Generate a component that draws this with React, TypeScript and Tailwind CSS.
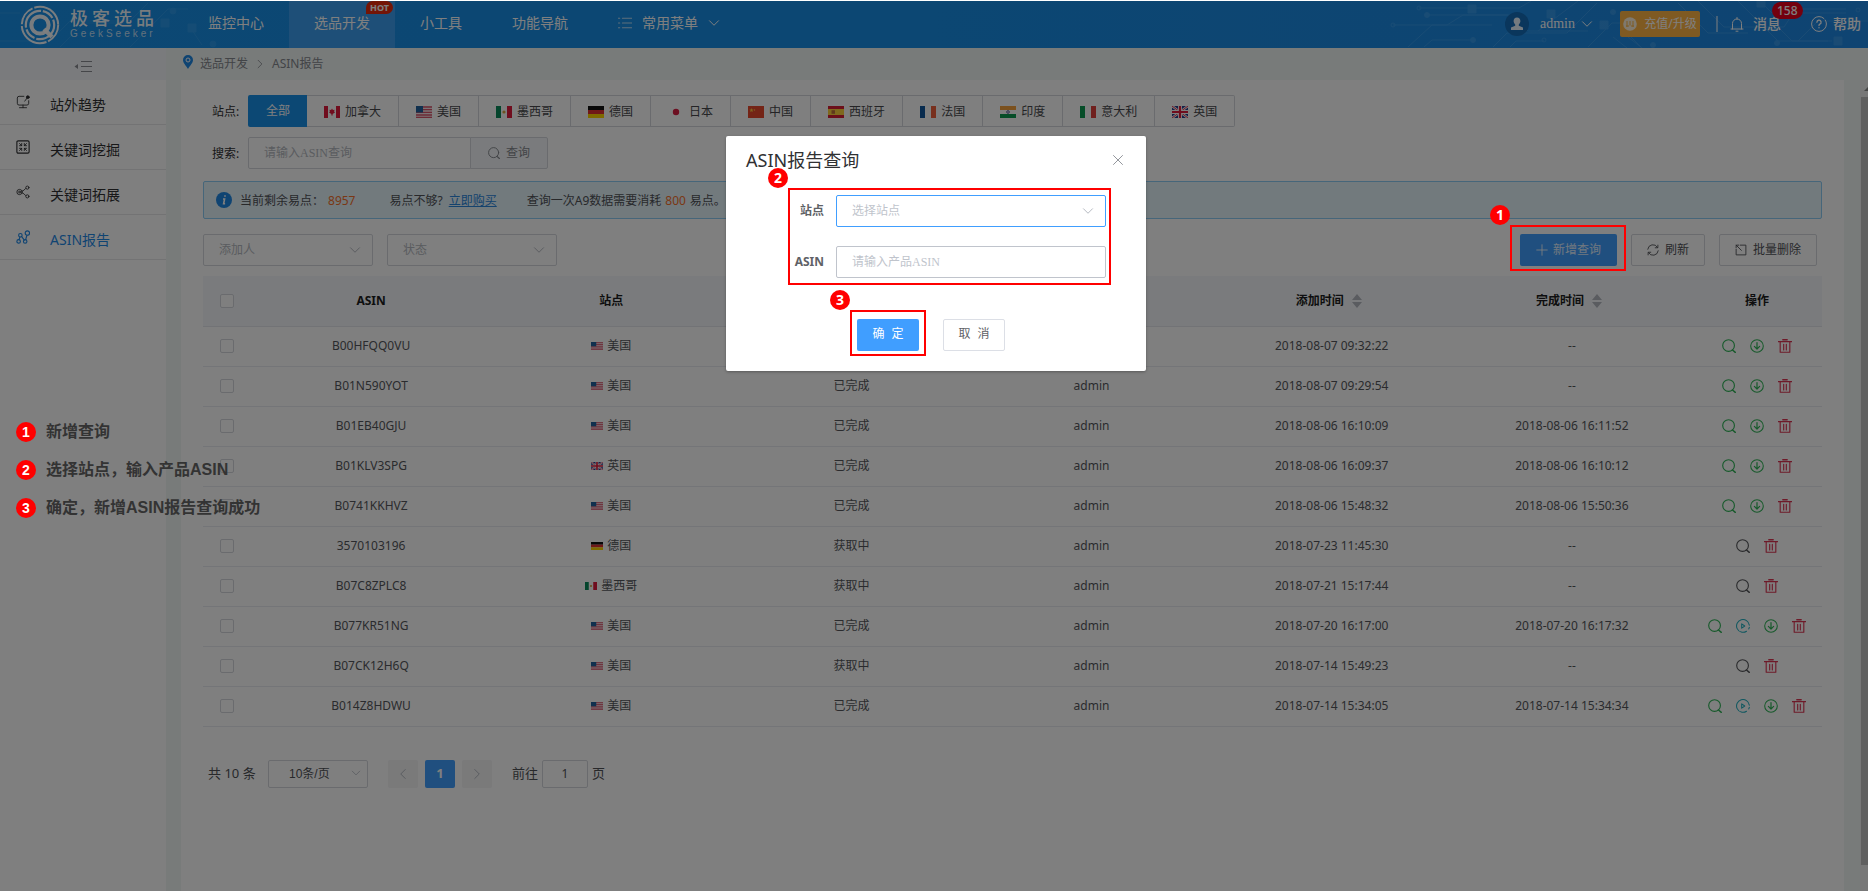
// src/App.tsx
import type { ReactNode } from 'react';

type Country = 'ca' | 'us' | 'mx' | 'de' | 'jp' | 'cn' | 'es' | 'fr' | 'in' | 'it' | 'uk';

const sites: { code: Country; name: string }[] = [
  { code: 'ca', name: '加拿大' },
  { code: 'us', name: '美国' },
  { code: 'mx', name: '墨西哥' },
  { code: 'de', name: '德国' },
  { code: 'jp', name: '日本' },
  { code: 'cn', name: '中国' },
  { code: 'es', name: '西班牙' },
  { code: 'fr', name: '法国' },
  { code: 'in', name: '印度' },
  { code: 'it', name: '意大利' },
  { code: 'uk', name: '英国' },
];

const reports: {
  asin: string;
  site: Country;
  status: string;
  added: string;
  finished: string;
  rerun?: boolean;
}[] = [
  { asin: 'B00HFQQ0VU', site: 'us', status: '已完成', added: '2018-08-07 09:32:22', finished: '--' },
  { asin: 'B01N590YOT', site: 'us', status: '已完成', added: '2018-08-07 09:29:54', finished: '--' },
  { asin: 'B01EB40GJU', site: 'us', status: '已完成', added: '2018-08-06 16:10:09', finished: '2018-08-06 16:11:52' },
  { asin: 'B01KLV3SPG', site: 'uk', status: '已完成', added: '2018-08-06 16:09:37', finished: '2018-08-06 16:10:12' },
  { asin: 'B0741KKHVZ', site: 'us', status: '已完成', added: '2018-08-06 15:48:32', finished: '2018-08-06 15:50:36' },
  { asin: '3570103196', site: 'de', status: '获取中', added: '2018-07-23 11:45:30', finished: '--' },
  { asin: 'B07C8ZPLC8', site: 'mx', status: '获取中', added: '2018-07-21 15:17:44', finished: '--' },
  { asin: 'B077KR51NG', site: 'us', status: '已完成', added: '2018-07-20 16:17:00', finished: '2018-07-20 16:17:32', rerun: true },
  { asin: 'B07CK12H6Q', site: 'us', status: '获取中', added: '2018-07-14 15:49:23', finished: '--' },
  { asin: 'B014Z8HDWU', site: 'us', status: '已完成', added: '2018-07-14 15:34:05', finished: '2018-07-14 15:34:34', rerun: true },
];

const steps = ['新增查询', '选择站点，输入产品ASIN', '确定，新增ASIN报告查询成功'];

const flagShapes: Record<Country, ReactNode> = {
  ca: (
    <>
      <rect width="16" height="12" fill="#fff" />
      <rect width="4" height="12" fill="#e01b3c" />
      <rect x="12" width="4" height="12" fill="#e01b3c" />
      <path d="M8 2.5l.9 1.6 1.6-.3-.3 2 .8.8-2.4 1.3V9.5h-1.2V7.900L5 6.600l.8-.8-.3-2 1.600.3z" fill="#e01b3c" />
    </>
  ),
  us: (
    <>
      <rect width="16" height="12" fill="#f6e4e8" />
      <path d="M0 1h16M0 3.700h16M0 6.400h16M0 9h16M0 11.500h16" stroke="#d8546c" strokeWidth="1.300" />
      <rect width="7" height="6.500" fill="#20609c" />
    </>
  ),
  mx: (
    <>
      <rect width="16" height="12" fill="#fff" />
      <rect width="5" height="12" fill="#0b8a5a" />
      <rect x="11" width="5" height="12" fill="#e01b3c" />
      <circle cx="8" cy="6" r="1.600" fill="#d9a441" />
    </>
  ),
  de: (
    <>
      <rect width="16" height="4" fill="#111" />
      <rect y="4" width="16" height="4" fill="#e03030" />
      <rect y="8" width="16" height="4" fill="#ffd500" />
    </>
  ),
  jp: (
    <>
      <rect width="16" height="12" fill="#fff" />
      <circle cx="8" cy="6" r="3.200" fill="#d81e42" />
    </>
  ),
  cn: (
    <>
      <rect width="16" height="12" fill="#e8492c" />
      <path d="M3.500 2l.6 1.400 1.500.1-1.200 1 .4 1.500-1.300-.8L2.200 6l.4-1.500-1.200-1 1.500-.1z" fill="#ffc83d" />
      <circle cx="6.500" cy="4" r=".7" fill="#ffc83d" />
    </>
  ),
  es: (
    <>
      <rect width="16" height="12" fill="#d81e34" />
      <rect y="3" width="16" height="6" fill="#ffd23d" />
      <rect x="3.500" y="4.200" width="3.500" height="3.600" fill="#c0703a" />
    </>
  ),
  fr: (
    <>
      <rect width="16" height="12" fill="#fff" />
      <rect width="5" height="12" fill="#10569c" />
      <rect x="11" width="5" height="12" fill="#f0603c" />
    </>
  ),
  in: (
    <>
      <rect width="16" height="12" fill="#fff" />
      <rect width="16" height="4" fill="#f7a23c" />
      <rect y="8" width="16" height="4" fill="#0c9a50" />
      <circle cx="8" cy="6" r="1.300" fill="none" stroke="#555a9c" />
    </>
  ),
  it: (
    <>
      <rect width="16" height="12" fill="#fff" />
      <rect width="5" height="12" fill="#0c9a50" />
      <rect x="11" width="5" height="12" fill="#e0413c" />
    </>
  ),
  uk: (
    <>
      <rect width="16" height="12" fill="#27408f" />
      <path d="M0 0l16 12M16 0L0 12" stroke="#fff" strokeWidth="2.400" />
      <path d="M0 0l16 12M16 0L0 12" stroke="#e01b3c" strokeWidth=".9" />
      <path d="M8 0v12M0 6h16" stroke="#fff" strokeWidth="4" />
      <path d="M8 0v12M0 6h16" stroke="#e01b3c" strokeWidth="2.200" />
    </>
  ),
};

function Flag({ code, small }: { code: Country; small?: boolean }) {
  return (
    <svg viewBox="0 0 16 12" preserveAspectRatio="none" className={small ? 'h-2 w-3 shrink-0' : 'h-3 w-4 shrink-0'}>
      {flagShapes[code]}
    </svg>
  );
}

function Icon({ children, className }: { children: ReactNode; className: string }) {
  return (
    <svg
      viewBox="0 0 16 16"
      fill="none"
      stroke="currentColor"
      strokeLinecap="round"
      strokeLinejoin="round"
      className={`shrink-0 ${className}`}
    >
      {children}
    </svg>
  );
}

const Chevron = ({ className }: { className: string }) => (
  <Icon className={className}>
    <path d="M2 5l6 6 6-6" strokeWidth="1.300" />
  </Icon>
);

const SearchIcon = ({ className }: { className: string }) => (
  <Icon className={className}>
    <circle cx="7.500" cy="7.500" r="6.700" strokeWidth="1.300" />
    <path d="M12 12.500l3.200 2.800" strokeWidth="1.600" />
  </Icon>
);

function Marker({ n, className = '' }: { n: number; className?: string }) {
  return (
    <span
      className={`flex size-5 shrink-0 items-center justify-center rounded-full bg-[#ff0000] text-sm leading-5 font-bold text-white ${className}`}
    >
      {n}
    </span>
  );
}

function Logo() {
  return (
    <a href="#" className="flex w-[183px] shrink-0 items-center gap-2.5 pl-5 text-white/95">
      <svg viewBox="0 0 40 40" fill="none" stroke="currentColor" className="size-10">
        <circle cx="20" cy="20" r="18.200" strokeWidth="2" strokeDasharray="20 1.800 34 1.800" />
        <circle cx="20" cy="20" r="14.200" strokeWidth="2.200" strokeDasharray="26 1.800 12 1.800" />
        <circle cx="20" cy="20" r="8.600" strokeWidth="4" />
        <path d="M24 24l8 8" strokeWidth="4.500" />
      </svg>
      <span className="flex flex-col pb-0.5">
        <span className="text-lg leading-5 font-medium tracking-[4px]">极客选品</span>
        <span className="font-['Liberation_Sans',sans-serif] text-[10px] leading-3 tracking-[3px] opacity-80">GeekSeeker</span>
      </span>
    </a>
  );
}

// faint printed-circuit lines on both ends of the top bar
function CircuitLines() {
  return (
    <>
      <svg
        viewBox="0 0 240 47"
        fill="none"
        stroke="#8fd0ff"
        className="absolute top-0 left-0 h-full w-[240px] opacity-15"
      >
        <path d="M0 40h50l20-20h60l18-18M60 46l24-24h40M130 46l22-22 16-16h20M190 26l12 18M0 12h20" />
        <path d="M161 18h8v8h-8zM188 23h8v8h-8z" fill="#8fd0ff" />
        <circle cx="173" cy="10" r="3" fill="#8fd0ff" />
        <circle cx="213" cy="43" r="3" fill="#8fd0ff" />
      </svg>
      <svg
        viewBox="0 0 480 47"
        fill="none"
        stroke="#8fd0ff"
        className="absolute top-0 right-0 h-full w-[480px] opacity-20"
      >
        <path d="M5 24h54l16-10h60M31 7h100l12-7M40 14h80l20 16h60M20 46l24-22h60M36 46l8-7h40M105 46l14-14h60l30-30M122 46l6-6h28M150 30l40-30M200 46l24-24h40M225 36l14 11M240 36l14 11M253 46l-14-14M290 2l30 30h40M310 0l26 26h60l12-18h50M350 0l40 40h50M372 0l12 12h74M386 22l18 18h40M410 40l20-20h50" />
        <path d="M80 4h8v8h-8zM159 9h8v8h-8zM212 20h8v8h-8zM369 0h8v6h-8zM446 36h8v8h-8z" fill="#8fd0ff" />
        <circle cx="31" cy="7" r="2" />
        <circle cx="5" cy="24" r="2" />
        <circle cx="39" cy="14" r="2.500" fill="#8fd0ff" />
        <circle cx="85" cy="39" r="2.500" fill="#8fd0ff" />
        <circle cx="156" cy="39" r="2" />
        <circle cx="225" cy="11" r="2.500" fill="#8fd0ff" />
        <circle cx="265" cy="44" r="2.500" fill="#8fd0ff" />
        <circle cx="389" cy="42" r="2.500" fill="#8fd0ff" />
        <circle cx="470" cy="9" r="2" />
      </svg>
    </>
  );
}

function Header() {
  return (
    <header className="relative flex h-[47px] shrink-0 bg-linear-to-r from-[#1890e8] via-[#188ee6] to-[#1e88e4] text-sm text-white">
      <CircuitLines />
      <div className="relative flex flex-1">
        <Logo />
        <nav className="flex">
          <a href="#" className="flex items-center px-[25px] pb-1">监控中心</a>
          <a href="#" className="relative flex items-center bg-[#3c9ff0] px-[25px] pb-1">
            选品开发
            <span className="absolute top-0 right-0.5 rounded-t-full rounded-br-full bg-[#e82a0c] px-1 text-[9px] leading-[13px] font-bold">
              HOT
            </span>
          </a>
          <a href="#" className="flex items-center px-[25px] pb-1">小工具</a>
          <a href="#" className="flex items-center px-[25px] pb-1">功能导航</a>
          <button className="flex items-center gap-2.5 px-[25px] pb-1">
            <Icon className="size-3.5 opacity-70">
              <path d="M5 2.500h11M5 8h11M5 13.500h11M.5 2.500h1.500M.5 8h1.500M.5 13.500h1.500" strokeWidth="1.200" />
            </Icon>
            常用菜单
            <Chevron className="size-3" />
          </button>
        </nav>
        <div className="ml-auto flex items-center pr-[7px] pb-0.5">
          <button className="flex items-center font-['Liberation_Serif',serif]">
            <svg viewBox="0 0 24 24" className="mr-[11px] size-6">
              <circle cx="12" cy="12" r="12" fill="#146cb8" />
              <path d="M12 5.500c2.200 0 3.400 1.600 3.400 3.600 0 1.500-.8 2.700-1.600 3.400v1.200l4.200 1.800V18H6v-2.500l4.200-1.800v-1.200C9.400 11.800 8.600 10.600 8.600 9.100c0-2 1.200-3.600 3.400-3.600z" fill="#e8f4ff" />
            </svg>
            admin
            <Chevron className="ml-1.5 size-3" />
          </button>
          <button className="ml-[27px] flex h-[26px] w-20 items-center justify-center gap-[7px] rounded-xs bg-[#ffb545] text-xs">
            <svg viewBox="0 0 14 14" className="size-3.5 shrink-0">
              <circle cx="7" cy="7" r="6.800" fill="#fff3dc" />
              <path d="M4 4v6M7 4v4.500M10 4v6M3 9h3M8 9h3" stroke="#ffb545" />
            </svg>
            <span className="whitespace-nowrap">充值/升级</span>
          </button>
          <span className="ml-4 h-4 w-0.5 bg-white/50" />
          <button className="relative ml-[11px] flex items-center font-medium">
            <Icon className="mr-2 size-4">
              <path d="M2 13h12M3.500 13V7.500a4.500 4.500 0 0 1 9 0V13M8 1.500V3M7 15.200h2" />
            </Icon>
            消息
            <span className="absolute -top-3 left-[43px] rounded-full bg-[#e8001c] px-[5px] text-xs leading-[17px]">158</span>
          </button>
          <a href="#" className="ml-[30px] flex items-center gap-1.5 font-medium">
            <Icon className="size-4">
              <circle cx="8" cy="8" r="7.400" strokeDasharray="40 2" />
              <path d="M5.900 6.200a2.100 2.100 0 1 1 3 2c-.6.300-.9.700-.9 1.300M8 11.600v.2" strokeWidth="1.300" />
            </Icon>
            帮助
          </a>
        </div>
      </div>
    </header>
  );
}

function Sidebar() {
  const items = [
    {
      label: '站外趋势',
      icon: (
        <>
          <path d="M9 1.500H3.500a2 2 0 0 0-2 2v6a2 2 0 0 0 2 2h9a2 2 0 0 0 2-2V6.500M8 11.500v3M4 14.500h8M10 7l3-4" />
          <circle cx="13.500" cy="2.500" r="1.600" fill="currentColor" />
        </>
      ),
    },
    {
      label: '关键词挖掘',
      icon: (
        <>
          <rect x="1" y="1" width="14" height="14" rx="1.500" strokeWidth="1.300" />
          <path d="M4 4l2.500 2.500M6.500 4v2.500H4M12 4L9.500 6.500M9.500 4v2.500H12M4 12l2.500-2.500M4 9.500h2.500V12M12 12L9.500 9.500M12 9.500H9.500V12" />
        </>
      ),
    },
    {
      label: '关键词拓展',
      icon: (
        <>
          <circle cx="4" cy="8" r="3" />
          <circle cx="4" cy="8" r="1" />
          <circle cx="13" cy="3" r="1.800" />
          <circle cx="13" cy="13" r="1.800" />
          <path d="M7 7l2-1 2-2M7 9l2 1 2 2" />
        </>
      ),
    },
    {
      label: 'ASIN报告',
      active: true,
      icon: (
        <>
          <circle cx="13" cy="3.500" r="2.500" strokeWidth="1.300" />
          <circle cx="5" cy="6" r="2" strokeWidth="1.300" />
          <circle cx="3" cy="13" r="2" strokeWidth="1.300" />
          <circle cx="10.500" cy="13" r="2" strokeWidth="1.300" />
          <path d="M4.500 8l-1 3M6.500 7.500l3 4M12.500 6l-1.500 5" strokeWidth="1.300" />
        </>
      ),
    },
  ];
  return (
    <aside className="w-[166px] shrink-0 bg-white text-sm text-[#303133]">
      <button aria-label="收起菜单" className="flex h-8 w-full items-center justify-center bg-[#f5f7fb] pt-1 text-[#8a8c92]">
        <svg viewBox="0 0 18 12" className="h-3 w-[18px]" stroke="currentColor">
          <path d="M7 1.500h11M7 6.500h11M7 11.500h11" />
          <path d="M4 4v5L.5 6.500z" fill="currentColor" stroke="none" />
        </svg>
      </button>
      <nav>
        {items.map((item) => (
          <a
            key={item.label}
            href="#"
            className={`flex h-[45px] items-center gap-5 border-b border-[#e6e6e8] pt-1.5 pl-4 ${item.active ? 'text-[#1e88e5]' : ''}`}
          >
            <Icon className="mb-1.5 size-3.5">{item.icon}</Icon>
            {item.label}
          </a>
        ))}
      </nav>
    </aside>
  );
}

function SelectBox({ id, label, className }: { id: string; label: string; className: string }) {
  return (
    <div className={`relative ${className}`}>
      <select
        id={id}
        aria-label={label}
        className="h-8 w-full appearance-none rounded-xs border border-[#d4d7dc] bg-white pl-[15px] text-xs"
      >
        <option>{label}</option>
      </select>
      <Chevron className="pointer-events-none absolute top-2.5 right-3 size-3 text-[#b4b8c0]" />
    </div>
  );
}

function Filters() {
  return (
    <>
      <div className="flex items-center pl-[9px]">
        <span className="w-9 pt-0.5 text-[#303133]">站点:</span>
        <div className="flex h-8 text-[#48494d]">
          <button className="rounded-l-xs bg-[#1890e8] px-[17px] pl-[18px] text-white">全部</button>
          {sites.map((site) => (
            <button
              key={site.code}
              className="flex items-center gap-[5px] border-y border-r border-[#d4d7dc] px-[17px] pt-0.5 last:rounded-r-xs"
            >
              <Flag code={site.code} />
              {site.name}
            </button>
          ))}
        </div>
      </div>
      <div className="mt-2.5 flex items-center pl-[9px]">
        <label htmlFor="search" className="w-9 pt-0.5 text-[#303133]">搜索:</label>
        <input
          id="search"
          placeholder="请输入ASIN查询"
          className="h-8 w-[223px] rounded-l-xs border border-[#d4d7dc] px-[15px] font-['Liberation_Serif','Noto_Sans_CJK_SC',serif] placeholder:text-[#b4b8c0]"
        />
        <button className="-ml-px flex h-8 w-[78px] items-center justify-center gap-1.5 rounded-r-xs border border-[#d4d7dc] bg-[#f5f7fa] text-[#85888e]">
          <SearchIcon className="size-3" />
          查询
        </button>
      </div>
      <div className="mt-3 flex h-[38px] items-center rounded-xs border border-[#8cccf5] bg-[#e4f4fb] pt-0.5 pl-3 text-[#505257]">
        <svg viewBox="0 0 16 16" className="mb-0.5 size-4">
          <circle cx="8" cy="8" r="8" fill="#1e88e5" />
          <path d="M9 3.200v1.600M7 7h1.600l-1 4.800h1.500" stroke="#fff" strokeWidth="1.600" fill="none" />
        </svg>
        <span className="ml-2">当前剩余易点：</span>
        <span className="ml-1 text-[#f5702a]">8957</span>
        <span className="ml-[34px]">易点不够?</span>
        <a href="#" className="ml-1.5 text-[#2a86dc] underline">立即购买</a>
        <span className="ml-[30px]">查询一次A9数据需要消耗</span>
        <span className="mx-1 text-[#f5702a]">800</span>
        <span>易点。</span>
      </div>
      <div className="mt-[15px] flex items-center gap-3.5">
        <SelectBox id="creator" label="添加人" className="w-[170px] text-[#b4b8c0]" />
        <SelectBox id="status" label="状态" className="w-[170px] text-[#b4b8c0]" />
        <div className="mr-[5px] ml-auto flex gap-3.5 text-[#505257]">
          <button className="flex h-8 items-center gap-[5px] rounded-xs bg-[#409eff] px-4 text-white/85">
            <Icon className="size-3">
              <path d="M8 1v14M1 8h14" strokeWidth="1.300" />
            </Icon>
            新增查询
          </button>
          <button className="flex h-8 items-center gap-1.5 rounded-xs border border-[#d4d7dc] px-[15px]">
            <Icon className="size-3">
              <path d="M1 7a7 7 0 0 1 13-2.500M15 9a7 7 0 0 1-13 2.500M14.500 1.500v3.500H11M1.500 14.500V11H5" strokeWidth="1.200" />
            </Icon>
            刷新
          </button>
          <button className="flex h-8 items-center gap-1.5 rounded-xs border border-[#d4d7dc] px-[15px]">
            <Icon className="size-3">
              <path d="M7 1.500h7.500v13h-13V7M1.500 1.500l7 7M1.500 5V1.500H5" strokeWidth="1.200" />
            </Icon>
            批量删除
          </button>
        </div>
      </div>
    </>
  );
}

function SortMark() {
  return (
    <svg viewBox="0 0 10 14" className="h-3.5 w-2.5 fill-[#b4b8c0]">
      <path d="M5 0l5 6H0zM5 14l5-6H0z" />
    </svg>
  );
}

function RowActions({ done, rerun }: { done: boolean; rerun?: boolean }) {
  return (
    <div className="flex items-center justify-center gap-3.5">
      <button aria-label="查看" className={done ? 'text-[#2fb457]' : 'text-[#55565a]'}>
        <SearchIcon className="size-3.5" />
      </button>
      {rerun && (
        <button aria-label="重新获取" className="text-[#22b0c0]">
          <Icon className="size-3.5">
            <path d="M15.200 7A7.300 7.300 0 1 0 12 14M15.200 9.500l-.6 1.800M6.500 5.500v5L10 8z" strokeWidth="1.200" />
          </Icon>
        </button>
      )}
      {done && (
        <button aria-label="下载" className="text-[#2fb457]">
          <Icon className="size-3.5">
            <circle cx="8" cy="8" r="7.200" strokeWidth="1.200" />
            <path d="M8 4v7.500M5 8.500l3 3 3-3" strokeWidth="1.400" />
          </Icon>
        </button>
      )}
      <button aria-label="删除" className="text-[#dc3452]">
        <Icon className="size-3.5">
          <path d="M5.500 .8h5M.5 3h15" strokeWidth="1.600" />
          <path d="M2.500 3.500v11.700h11V3.500M6.500 6v6.500M9.500 6v6.500" strokeWidth="1.300" />
        </Icon>
      </button>
    </div>
  );
}

function CheckBox({ label }: { label: string }) {
  return (
    <input
      type="checkbox"
      aria-label={label}
      className="mx-auto block size-3.5 appearance-none rounded-xs border border-[#d4d7dc] bg-white"
    />
  );
}

function ReportTable() {
  return (
    <table className="mt-2.5 w-full table-fixed text-center text-[#55575c]">
      <thead className="bg-[#f5f7fb] text-[#1c1d20]">
        <tr className="h-[50px] border-b border-[#e4e7ed]">
          <th className="w-12"><CheckBox label="全选" /></th>
          <th>ASIN</th>
          <th>站点</th>
          <th>状态</th>
          <th>添加人</th>
          <th>
            <span className="flex items-center justify-center gap-2 pr-1.5">添加时间 <SortMark /></span>
          </th>
          <th>
            <span className="flex items-center justify-center gap-2 pr-1.5">完成时间 <SortMark /></span>
          </th>
          <th className="w-[130px]">操作</th>
        </tr>
      </thead>
      <tbody>
        {reports.map((row) => (
          <tr key={row.asin} className="h-10 border-b border-[#e9ebf0]">
            <td><CheckBox label={row.asin} /></td>
            <td>{row.asin}</td>
            <td>
              <span className="flex items-center justify-center gap-1">
                <Flag code={row.site} small />
                {sites.find((s) => s.code === row.site)?.name}
              </span>
            </td>
            <td>{row.status}</td>
            <td>admin</td>
            <td>{row.added}</td>
            <td>{row.finished}</td>
            <td><RowActions done={row.status === '已完成'} rerun={row.rerun} /></td>
          </tr>
        ))}
      </tbody>
    </table>
  );
}

function Pagination() {
  return (
    <div className="mt-[33px] flex items-center pl-[5px] text-[13px] text-[#505257]">
      <span className="w-[60px]">共 10 条</span>
      <div className="relative w-[100px]">
        <select
          aria-label="每页条数"
          className="h-7 w-full appearance-none rounded-xs border border-[#d4d7dc] pl-5 font-['Liberation_Sans','Noto_Sans_CJK_SC',sans-serif] text-xs"
        >
          <option>10条/页</option>
        </select>
        <Chevron className="pointer-events-none absolute top-2 right-[7px] size-2.5 text-[#b4b8c0]" />
      </div>
      <div className="ml-5 flex gap-[7px]">
        <button aria-label="上一页" className="flex h-7 w-[30px] items-center justify-center rounded-xs bg-[#f4f4f5] text-[#b4b8c0]">
          <Chevron className="size-3 rotate-90" />
        </button>
        <button className="h-7 w-[30px] rounded-xs bg-[#409eff] font-bold text-white">1</button>
        <button aria-label="下一页" className="flex h-7 w-[30px] items-center justify-center rounded-xs bg-[#f4f4f5] text-[#b4b8c0]">
          <Chevron className="size-3 -rotate-90" />
        </button>
      </div>
      <label htmlFor="page" className="ml-5">前往</label>
      <input
        id="page"
        defaultValue="1"
        className="mx-1 h-7 w-[46px] rounded-xs border border-[#d4d7dc] text-center text-xs"
      />
      <span>页</span>
    </div>
  );
}

function ScrollBar() {
  return (
    <div className="ml-4 flex w-2 flex-col bg-[#f1f1f1] pl-px">
      <svg viewBox="0 0 7 17" className="h-[17px] w-[7px] fill-[#8a8a8a]">
        <path d="M3 11l4-4v4z" />
      </svg>
      <div className="mb-[26px] flex-1 bg-[#c1c1c1]" />
    </div>
  );
}

function Dialog() {
  return (
    <div role="dialog" aria-labelledby="dialog-title" className="w-[420px] rounded-xs bg-white shadow-[0_1px_3px_rgba(0,0,0,0.3)]">
      <div className="flex items-center justify-between px-5 pt-3">
        <h2 id="dialog-title" className="text-lg leading-6 text-[#303133]">ASIN报告查询</h2>
        <button aria-label="关闭" className="mr-0.5 text-[#909399]">
          <Icon className="size-3">
            <path d="M2 2l12 12M14 2L2 14" strokeWidth="1.300" />
          </Icon>
        </button>
      </div>
      <form className="pb-5">
        <div className="relative mt-4 mr-[35px] ml-[62px] flex flex-col gap-[19px] border-2 border-[#ff0000] py-[5px] pr-[3px] font-bold text-[#606266]">
          <Marker n={2} className="absolute -top-[22px] -left-[22px]" />
          <div className="flex items-center">
            <label htmlFor="site" className="w-[34px] text-right">站点</label>
            <SelectBox id="site" label="选择站点" className="ml-3 flex-1 font-normal text-[#c0c4cc] [&>select]:border-[#409eff]" />
          </div>
          <div className="flex items-center">
            <label htmlFor="asin" className="w-[34px] text-right">ASIN</label>
            <input
              id="asin"
              placeholder="请输入产品ASIN"
              className="ml-3 h-8 min-w-0 flex-1 rounded-xs border border-[#c0c4cc] px-[15px] font-['Liberation_Serif','Noto_Sans_CJK_SC',serif] font-normal placeholder:text-[#c0c4cc]"
            />
          </div>
        </div>
        <div className="mt-[34px] flex items-center gap-6 pl-[131px] font-['Liberation_Mono','Noto_Sans_CJK_SC',monospace]">
          <div className="relative">
            <button type="button" className="h-8 w-[62px] rounded-xs bg-[#409eff] text-white">确 定</button>
            <span className="pointer-events-none absolute -inset-x-[7px] -top-[9px] -bottom-[5px] border-2 border-[#ff0000]" />
            <Marker n={3} className="absolute -top-[29px] -left-[27px] font-['Noto_Sans',sans-serif]" />
          </div>
          <button type="button" className="h-8 w-[62px] rounded-xs border border-[#dcdfe6] text-[#606266]">取 消</button>
        </div>
      </form>
    </div>
  );
}

export default function App() {
  return (
    <div className="relative flex min-h-screen flex-col border-t border-white bg-white font-['Noto_Sans','Noto_Sans_CJK_SC',sans-serif] text-xs">
      <Header />
      <div className="flex flex-1">
        <Sidebar />
        <main className="flex flex-1 flex-col bg-[#f1f7f5] pl-[15px]">
          <div className="flex h-8 items-center pl-0.5 text-[#85888e]">
            <svg viewBox="0 0 10 14" className="mb-1 h-3.5 w-2.5">
              <path d="M5 0a5 5 0 0 1 5 5c0 3-3 5.500-5 9C3 10.500 0 8 0 5a5 5 0 0 1 5-5z" fill="#1e88e5" />
              <circle cx="5" cy="5" r="2" fill="none" stroke="#fff" />
            </svg>
            <a href="#" className="ml-[7px]">选品开发</a>
            <Chevron className="mx-[7px] size-2.5 -rotate-90" />
            <span>ASIN报告</span>
          </div>
          <div className="flex flex-1">
            <section className="min-w-0 flex-1 bg-white px-[22px] pt-[15px]">
              <Filters />
              <ReportTable />
              <Pagination />
            </section>
            <ScrollBar />
          </div>
        </main>
      </div>

      <div className="absolute inset-0 flex items-start justify-center bg-black/50 pt-[135px] pl-1">
        <Dialog />
      </div>

      {/* step 1 highlight, sits over the dimmed add button */}
      <div className="absolute top-[224px] right-[242px] h-[46px] w-[116px] border-2 border-[#ff0000]">
        <Marker n={1} className="absolute -top-[22px] -left-[22px]" />
      </div>
      <ol className="absolute top-[421px] left-4 flex flex-col gap-[18px] font-['Liberation_Sans','Noto_Sans_CJK_SC',sans-serif] text-base leading-5 font-bold text-[#333]">
        {steps.map((step, index) => (
          <li key={step} className="flex items-center gap-2.5">
            <Marker n={index + 1} />
            {step}
          </li>
        ))}
      </ol>
    </div>
  );
}
